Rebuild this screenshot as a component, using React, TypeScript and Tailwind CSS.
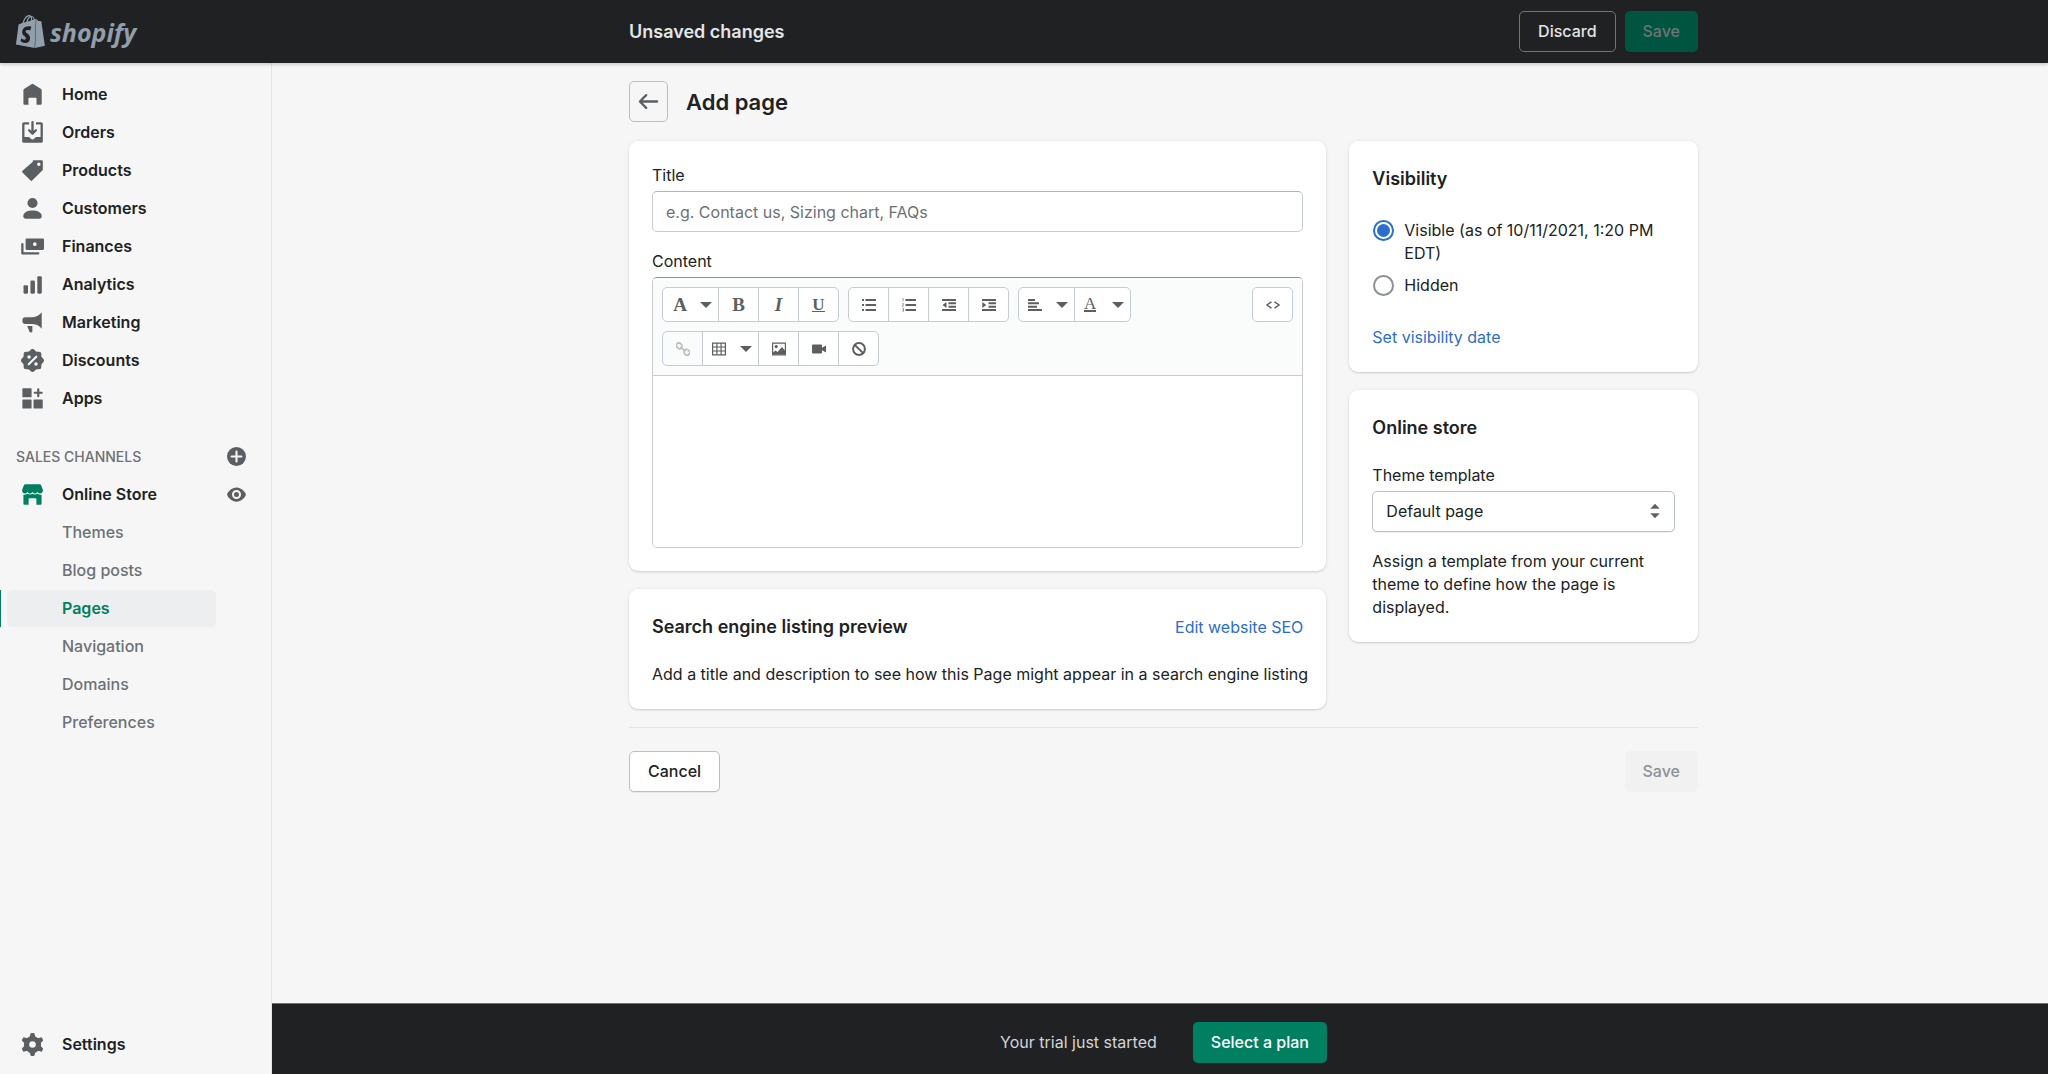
import React, { useState } from 'react'
import { SiShopify } from 'react-icons/si'

type IconProps = { children: React.ReactNode; className?: string }

function Icon({ children, className = 'size-[23px] text-[#5c5f62]' }: IconProps) {
  return (
    <svg viewBox="0 0 20 20" fill="currentColor" aria-hidden="true" className={`shrink-0 ${className}`}>
      {children}
    </svg>
  )
}

const mainLinks = [
  { label: 'Home', icon: <path d="M9.1 1a1.700 1.700 0 0 1 1.800 0l6.200 3.900c.5.3.9.900.9 1.500v11.700a.9.900 0 0 1-.9.900h-3.600v-5.300a.8.800 0 0 0-.8-.800H7.300a.8.800 0 0 0-.8.800V19H3a.9.900 0 0 1-.9-.9V6.400c0-.6.300-1.200.8-1.500z" /> },
  {
    label: 'Orders',
    icon: (
      <>
        <path d="M11 1a1 1 0 1 0-2 0v7.586L7.707 7.293a1 1 0 0 0-1.414 1.414l3 3a1 1 0 0 0 1.414 0l3-3a1 1 0 0 0-1.414-1.414L11 8.586V1z" />
        <path d="M3 14V3h4V1H2.500A1.500 1.500 0 0 0 1 2.500v15A1.500 1.500 0 0 0 2.500 19h15a1.500 1.500 0 0 0 1.500-1.500v-15A1.500 1.500 0 0 0 17.500 1H13v2h4v11h-3.500c-.775 0-1.388.662-1.926 1.244l-.110.120A1.994 1.994 0 0 1 10 16a1.994 1.994 0 0 1-1.463-.637l-.111-.120C7.888 14.664 7.275 14 6.500 14H3z" />
      </>
    ),
  },
  { label: 'Products', icon: <path fillRule="evenodd" d="M10.293 1.293A1 1 0 0 1 11 1h7a1 1 0 0 1 1 1v7a1 1 0 0 1-.293.707l-9 9a1 1 0 0 1-1.414 0l-7-7a1 1 0 0 1 0-1.414l9-8zM15.500 6a1.500 1.500 0 1 0 0-3 1.500 1.500 0 0 0 0 3z" /> },
  {
    label: 'Customers',
    icon: (
      <>
        <circle cx="10" cy="5.200" r="4.400" />
        <path d="M2.100 15.600C3 13 6.200 11.800 10 11.800s7 1.200 7.900 3.800c.500 1.700-.400 3.400-2.100 3.400H4.200c-1.700 0-2.600-1.700-2.100-3.400z" />
      </>
    ),
  },
  {
    label: 'Finances',
    icon: (
      <>
        <path fillRule="evenodd" d="M5 3h14a1 1 0 0 1 1 1v8a1 1 0 0 1-1 1H5a1 1 0 0 1-1-1V4a1 1 0 0 1 1-1zm7 6.600a1.600 1.600 0 1 0 0-3.200 1.600 1.600 0 0 0 0 3.200z" />
        <path d="M1.200 7a1 1 0 0 1 1 1v7H15a1 1 0 1 1 0 2H1.200a1 1 0 0 1-1-1V8a1 1 0 0 1 1-1z" />
      </>
    ),
  },
  {
    label: 'Analytics',
    icon: (
      <>
        <rect x="2.200" y="10.600" width="3.900" height="7.400" rx="1" />
        <rect x="8.200" y="6.500" width="3.900" height="11.500" rx="1" />
        <rect x="14.200" y="2.800" width="3.900" height="15.200" rx="1" />
      </>
    ),
  },
  { label: 'Marketing', icon: <path d="M18 1v14.500c-2.500-2.900-5-4.100-9-4.100H3.800a2.600 2.600 0 0 1-2.600-2.600v-.800a2.600 2.600 0 0 1 2.600-2.600H9C13 5.400 15.500 3.900 18 1zM5.400 13h4.500v4.600a1 1 0 0 1-1 1h-.600c-.500 0-.900-.300-1-.700z" /> },
  {
    label: 'Discounts',
    icon: (
      <>
        <path d="M11.566.66a2.189 2.189 0 0 0-3.132 0l-.962.985a2.189 2.189 0 0 1-1.592.66l-1.377-.017a2.189 2.189 0 0 0-2.215 2.215l.016 1.377a2.189 2.189 0 0 1-.66 1.592l-.984.962a2.189 2.189 0 0 0 0 3.132l.985.962c.428.418.667.994.66 1.592l-.017 1.377a2.189 2.189 0 0 0 2.215 2.215l1.377-.016a2.189 2.189 0 0 1 1.592.66l.962.984c.859.88 2.273.88 3.132 0l.962-.985a2.189 2.189 0 0 1 1.592-.66l1.377.017a2.189 2.189 0 0 0 2.215-2.215l-.016-1.377a2.189 2.189 0 0 1 .66-1.592l.984-.962c.88-.859.88-2.273 0-3.132l-.985-.962a2.189 2.189 0 0 1-.66-1.592l.017-1.377a2.189 2.189 0 0 0-2.215-2.215l-1.377.016a2.189 2.189 0 0 1-1.592-.66l-.962-.984z" />
        <path d="M6.700 13.300l6.600-6.600" stroke="#f6f6f7" strokeWidth="1.800" strokeLinecap="round" />
        <circle cx="7" cy="7" r="1.500" fill="#f6f6f7" />
        <circle cx="13" cy="13" r="1.500" fill="#f6f6f7" />
      </>
    ),
  },
  {
    label: 'Apps',
    icon: (
      <>
        <rect x="1.200" y="1" width="8" height="8" rx=".6" />
        <rect x="1.200" y="10.800" width="8" height="8" rx=".6" />
        <rect x="10.900" y="10.800" width="8" height="8" rx=".6" />
        <path d="M15 2v6M12 5h6" stroke="currentColor" strokeWidth="1.900" strokeLinecap="round" />
      </>
    ),
  },
]

const storeLinks = ['Themes', 'Blog posts', 'Pages', 'Navigation', 'Domains', 'Preferences']

function Sidebar() {
  return (
    <aside className="flex w-[272px] shrink-0 flex-col border-r border-[#e1e3e5] pt-[13px] pb-[11px]">
      <nav aria-label="Main">
        <ul className="flex flex-col gap-px">
          {mainLinks.map((link) => (
            <li key={link.label}>
              <a href="#" className="flex h-[37px] items-center gap-[18px] pl-[21px] font-semibold">
                <Icon>{link.icon}</Icon>
                {link.label}
              </a>
            </li>
          ))}
        </ul>
      </nav>

      <div className="mt-5 flex h-[39px] items-center justify-between pr-[25px] pl-4">
        <h2 className="text-[14px] font-medium text-[#6d7175]">SALES CHANNELS</h2>
        <button type="button" aria-label="Add sales channel">
          <Icon className="size-[19px] text-[#5c5f62]">
            <circle cx="10" cy="10" r="10" />
            <path d="M10 4.800v10.400M4.800 10h10.400" stroke="#f6f6f7" strokeWidth="2.200" strokeLinecap="round" />
          </Icon>
        </button>
      </div>

      <nav aria-label="Sales channels">
        <div className="flex items-center justify-between pr-[25px]">
          <a href="#" className="flex h-[37px] items-center gap-[18px] pl-[21px] font-semibold">
            <Icon className="size-[23px] text-[#008060]">
              <path d="M3.800 1h12.400c.600 0 1.100.300 1.300.900l1.500 4c.400 1.700-.700 3.200-2.400 3.200-1 0-1.800-.500-2.200-1.300-.400.800-1.200 1.300-2.200 1.300s-1.800-.500-2.200-1.300c-.400.800-1.200 1.300-2.200 1.300s-1.800-.500-2.200-1.300c-.400.800-1.200 1.300-2.200 1.300C1.700 9.100.600 7.600 1 5.900l1.500-4c.200-.600.700-.900 1.300-.9z" />
              <path d="M2.100 10.200c1.300.200 2.500-.100 3.500-.800 1.300.900 3.100.900 4.400 0 1.300.9 3.100.9 4.400 0 1 .7 2.200 1 3.500.8V18.100a.9.9 0 0 1-.9.9h-3.600v-4.900a.9.9 0 0 0-.9-.9h-5a.9.9 0 0 0-.9.9V19H3a.9.9 0 0 1-.9-.9z" />
            </Icon>
            Online Store
          </a>
          <button type="button" aria-label="View your online store">
            <Icon className="size-[19px] text-[#5c5f62]">
              <path d="M19.800 9.500C18.900 6.700 15 2.500 10 2.500S1.100 6.700.200 9.500a1.500 1.500 0 0 0 0 1c.900 2.800 4.800 7 9.800 7s8.900-4.200 9.800-7a1.500 1.500 0 0 0 0-1z" />
              <circle cx="10" cy="10" r="3.700" fill="none" stroke="#f6f6f7" strokeWidth="2.100" />
            </Icon>
          </button>
        </div>
        <ul className="mt-px flex flex-col gap-px">
          {storeLinks.map((label) => (
            <li key={label} className={`flex border-l ${label === 'Pages' ? 'border-[#008060]' : 'border-transparent'}`}>
              <a
                href="#"
                aria-current={label === 'Pages' ? 'page' : undefined}
                className={`mr-[55px] ml-[6px] flex h-[37px] flex-1 items-center rounded-[5px] pl-[55px] ${
                  label === 'Pages' ? 'bg-[#edeeef] font-semibold text-[#008060]' : 'font-medium text-[#6d7175]'
                }`}
              >
                {label}
              </a>
            </li>
          ))}
        </ul>
      </nav>

      <a href="#" className="mt-auto flex h-[37px] items-center gap-[18px] pl-[21px] font-semibold">
        <Icon>
          <circle cx="10" cy="10" r="5.200" fill="none" stroke="currentColor" strokeWidth="4.600" />
          <path d="M8.200.8c.1-.5.400-.8.900-.8h1.800c.5 0 .8.300.9.800l.8 3.200H7.400zM11.800 19.200c-.1.500-.4.800-.9.800H9.100c-.5 0-.8-.3-.9-.8L7.400 16h5.200z" />
          <path transform="rotate(60 10 10)" d="M8.200.8c.1-.5.400-.8.900-.8h1.800c.5 0 .8.300.9.800l.8 3.200H7.400zM11.800 19.200c-.1.500-.4.800-.9.800H9.100c-.5 0-.8-.3-.9-.8L7.400 16h5.200z" />
          <path transform="rotate(120 10 10)" d="M8.200.8c.1-.5.400-.8.900-.8h1.800c.5 0 .8.300.9.800l.8 3.200H7.400zM11.800 19.200c-.1.500-.4.800-.9.800H9.100c-.5 0-.8-.3-.9-.8L7.400 16h5.200z" />
        </Icon>
        Settings
      </a>
    </aside>
  )
}

function TopBar() {
  return (
    <header className="z-10 flex h-[63px] shrink-0 items-center bg-[#202123] shadow-[0_2px_3px_rgba(0,0,0,0.16)]">
      <a href="#" aria-label="shopify" className="flex w-[272px] shrink-0 items-center gap-[3px] pl-[14px] text-[#919eab]">
        <SiShopify className="size-[33px]" />
        <span className="font-['Open_Sans',sans-serif] text-[25px] leading-8 font-bold italic">shopify</span>
      </a>
      <div className="flex-1 pl-[7px]">
        <div className="mx-auto flex max-w-[1069px] items-center gap-[9px]">
          <h2 className="mr-auto text-[18px] font-semibold text-[#e3e5e7]">Unsaved changes</h2>
          <button type="button" className="h-[41px] rounded-[5px] border border-[#72767b] px-[18px] font-medium text-[#e3e5e7]">Discard</button>
          <button type="button" disabled className="h-[41px] rounded-[5px] bg-[#005540] px-[18px] font-medium text-[#6f7377]">Save</button>
        </div>
      </div>
    </header>
  )
}

function Caret() {
  return (
    <svg viewBox="0 0 12 6" className="h-[6px] w-3" fill="currentColor" aria-hidden="true">
      <path d="M0 0h12L6 6z" />
    </svg>
  )
}

type ToolProps = { label: string; children: React.ReactNode; menu?: boolean; disabled?: boolean }

function Tool({ label, children, menu, disabled }: ToolProps) {
  return (
    <button
      type="button"
      aria-label={label}
      disabled={disabled}
      className={`-ml-px flex h-[35px] items-center border border-[#c4cdd5] font-['Liberation_Serif',serif] text-[19px] leading-none text-[#5c5f62] first:ml-0 first:rounded-l-[5px] last:rounded-r-[5px] ${
        menu ? 'w-[57px] justify-between pr-[6px] pl-[9px]' : 'w-[41px] justify-center'
      } ${disabled ? 'bg-[#fafbfb] text-[#babec3]' : 'bg-white'}`}
    >
      {children}
      {menu && <Caret />}
    </button>
  )
}

function Glyph({ children }: { children: React.ReactNode }) {
  return (
    <svg viewBox="0 0 14 14" className="size-[14px]" fill="currentColor" aria-hidden="true">
      {children}
    </svg>
  )
}

function Editor() {
  return (
    <div className="overflow-hidden rounded-[5px] border border-[#c9cccf] border-t-[#8c9196]">
      <div className="flex flex-col gap-[9px] border-b border-[#c9cccf] bg-[#fafbfb] p-[9px]">
        <div className="flex gap-[9px]">
          <div className="flex">
            <Tool label="Formatting" menu><span className="w-4 text-center font-bold">A</span></Tool>
            <Tool label="Bold"><span className="font-bold">B</span></Tool>
            <Tool label="Italic"><span className="font-bold italic">I</span></Tool>
            <Tool label="Underline"><span className="border-b border-current text-[17px] leading-[13px] font-bold">U</span></Tool>
          </div>
          <div className="flex">
            <Tool label="Bulleted list">
              <Glyph>
                <path d="M0 1h2v2H0zM0 6h2v2H0zM0 11h2v2H0zM3.500 1H14v2H3.500zM3.500 6H14v2H3.500zM3.500 11H14v2H3.500z" />
              </Glyph>
            </Tool>
            <Tool label="Numbered list">
              <Glyph>
                <path d="M3.500 1H14v2H3.500zM3.500 6H14v2H3.500zM3.500 11H14v2H3.500z" />
                <path d="M.3.800 1.200.500V3.500M.2 5.700h1.500L.3 8.200h1.600M.3 10.300h1.200v3H.3M.6 11.800h.9" fill="none" stroke="currentColor" strokeWidth=".6" />
              </Glyph>
            </Tool>
            <Tool label="Outdent">
              <Glyph>
                <path d="M0 1h14v2H0zM6.500 4.300H14v2H6.500zM6.500 7.700H14v2H6.500zM0 11h14v2H0zM4.500 4v6L.5 7z" />
              </Glyph>
            </Tool>
            <Tool label="Indent">
              <Glyph>
                <path d="M0 1h14v2H0zM6.500 4.300H14v2H6.500zM6.500 7.700H14v2H6.500zM0 11h14v2H0zM.3 4v6l4-3z" />
              </Glyph>
            </Tool>
          </div>
          <div className="flex">
            <Tool label="Alignment" menu>
              <Glyph>
                <path d="M0 1h7v2H0zM0 4.300h11v2H0zM0 7.700h9v2H0zM0 11h14v2H0z" />
              </Glyph>
            </Tool>
            <Tool label="Color" menu><span className="border-b-2 border-current text-center text-[17px] leading-[13px]">A</span></Tool>
          </div>
          <div className="ml-auto flex">
            <Tool label="Show HTML">
              <Glyph>
                <path d="M5.500 3.800.8 7l4.700 3.200M8.500 3.800 13.200 7l-4.700 3.200" fill="none" stroke="currentColor" strokeWidth="1.500" />
              </Glyph>
            </Tool>
          </div>
        </div>
        <div className="flex">
          <Tool label="Insert link" disabled>
            <Glyph>
              <g fill="none" stroke="currentColor" strokeWidth="1.700">
                <rect x=".2" y="1.300" width="6" height="5" rx="2.500" transform="rotate(45 3.200 3.800)" />
                <rect x="7.800" y="7.700" width="6" height="5" rx="2.500" transform="rotate(45 10.800 10.200)" />
                <path d="M4.500 4.800l5 4.600" />
              </g>
            </Glyph>
          </Tool>
          <Tool label="Insert table" menu>
            <Glyph>
              <path d="M.6 1.100h12.800v11.800H.6zM.6 5h12.800M.6 9h12.800M4.900 1v12M9.100 1v12" fill="none" stroke="currentColor" strokeWidth="1.200" />
            </Glyph>
          </Tool>
          <Tool label="Insert image">
            <Glyph>
              <path d="M.6 1.100h12.800v11.800H.6z" fill="none" stroke="currentColor" strokeWidth="1.200" />
              <circle cx="4.200" cy="4.600" r="1.600" />
              <path d="M1 12.500v-2L3.500 8.500 5.500 10 10 5l3 3.500v4z" />
            </Glyph>
          </Tool>
          <Tool label="Insert video">
            <Glyph>
              <path d="M1 2.500h8a1 1 0 0 1 1 1v2.300L14 3.500v7L10 8.200v2.300a1 1 0 0 1-1 1H1a1 1 0 0 1-1-1v-7a1 1 0 0 1 1-1z" />
            </Glyph>
          </Tool>
          <Tool label="Clear formatting">
            <Glyph>
              <path d="M2.500 2.800l9 8.600" stroke="currentColor" strokeWidth="2" />
              <circle cx="7" cy="7" r="5.900" fill="none" stroke="currentColor" strokeWidth="2" />
            </Glyph>
          </Tool>
        </div>
      </div>
      <textarea id="content" className="block h-[171px] w-full resize-none bg-white p-3 outline-none" />
    </div>
  )
}

function Card({ children }: { children: React.ReactNode }) {
  return (
    <section className="rounded-[9px] bg-white p-[23px] shadow-[0_0_5px_rgba(23,24,24,0.05),0_1px_2px_rgba(0,0,0,0.15)]">
      {children}
    </section>
  )
}

const radioClass =
  "mt-px grid size-[21px] shrink-0 appearance-none place-content-center rounded-full border-2 border-[#8c9196] checked:border-[#2c6ecb] before:size-[13px] before:rounded-full checked:before:bg-[#2c6ecb] before:content-['']"

function App() {
  const [visible, setVisible] = useState(true)

  return (
    <div className="flex h-screen flex-col bg-[#f6f6f7] font-[Inter,sans-serif] text-[16px] leading-[23px] text-[#202223]">
      <TopBar />
      <div className="flex min-h-0 flex-1">
        <Sidebar />
        <div className="flex min-w-0 flex-1 flex-col">
          <main className="min-h-0 flex-1 pt-[18px] pl-[7px]">
            <div className="mx-auto max-w-[1069px]">
              <div className="mb-[19px] flex items-center gap-[18px]">
                <button type="button" aria-label="Back" className="flex h-[41px] w-[39px] items-center justify-center rounded-[5px] border border-[#babfc3]">
                  <Icon>
                    <path d="M17.500 10H3M8 4.500 2.500 10 8 15.500" fill="none" stroke="currentColor" strokeWidth="2" strokeLinecap="round" strokeLinejoin="round" />
                  </Icon>
                </button>
                <h1 className="text-[22px] leading-8 font-semibold">Add page</h1>
              </div>

              <div className="grid grid-cols-[minmax(0,2fr)_minmax(0,1fr)] items-start gap-[23px]">
                <div className="flex flex-col gap-[18px]">
                  <Card>
                    <label htmlFor="title" className="mb-1 block">Title</label>
                    <input
                      id="title"
                      type="text"
                      placeholder="e.g. Contact us, Sizing chart, FAQs"
                      className="mb-[18px] block h-[41px] w-full rounded-[5px] border border-[#c9cccf] border-t-[#aeb4b9] px-[13px] placeholder:text-[#6d7175]"
                    />
                    <label htmlFor="content" className="mb-1 block">Content</label>
                    <Editor />
                  </Card>
                  <Card>
                    <div className="flex items-center justify-between">
                      <h2 className="text-[18px] leading-[30px] font-semibold">Search engine listing preview</h2>
                      <a href="#" className="text-[#2c6ecb]">Edit website SEO</a>
                    </div>
                    <p className="mt-[21px] xl:whitespace-nowrap">Add a title and description to see how this Page might appear in a search engine listing</p>
                  </Card>
                </div>

                <div className="flex flex-col gap-[18px]">
                  <Card>
                    <h2 className="text-[18px] leading-[30px] font-semibold">Visibility</h2>
                    <div className="mt-[25px] flex flex-col gap-[9px]">
                      <label className="flex gap-[10px] pl-px">
                        <input type="radio" name="visibility" checked={visible} onChange={() => setVisible(true)} className={radioClass} />
                        <span>Visible (as of 10/11/2021, 1:20 PM EDT)</span>
                      </label>
                      <label className="flex gap-[10px] pl-px">
                        <input type="radio" name="visibility" checked={!visible} onChange={() => setVisible(false)} className={radioClass} />
                        <span>Hidden</span>
                      </label>
                    </div>
                    <a href="#" className="mt-[29px] block text-[#2c6ecb]">Set visibility date</a>
                  </Card>
                  <Card>
                    <h2 className="text-[18px] leading-[30px] font-semibold">Online store</h2>
                    <label htmlFor="template" className="mt-[21px] mb-1 block">Theme template</label>
                    <div className="relative">
                      <select id="template" className="h-[41px] w-full appearance-none rounded-[5px] border border-[#babfc3] bg-white px-[13px] shadow-[0_1px_0_rgba(0,0,0,0.05)]">
                        <option>Default page</option>
                      </select>
                      <svg viewBox="0 0 10 14" className="pointer-events-none absolute top-[13px] right-[15px] h-[14px] w-[10px] text-[#5c5f62]" fill="currentColor" aria-hidden="true">
                        <path d="M5 0l4.300 4.500H.7zM5 14L.7 9.500h8.600z" stroke="currentColor" strokeWidth=".4" strokeLinejoin="round" />
                      </svg>
                    </div>
                    <p className="mt-[18px]">Assign a template from your current theme to define how the page is displayed.</p>
                  </Card>
                </div>
              </div>

              <div className="mt-[18px] flex justify-between border-t border-[#e1e3e5] pt-[23px]">
                <button type="button" className="h-[41px] rounded-[5px] border border-[#babfc3] bg-white px-[18px] font-medium shadow-[0_1px_0_rgba(0,0,0,0.05)]">Cancel</button>
                <button type="button" disabled className="h-[41px] rounded-[5px] bg-[#f1f1f1] px-[18px] font-medium text-[#8c9196]">Save</button>
              </div>
            </div>
          </main>

          <footer className="flex h-[71px] shrink-0 items-center justify-center gap-9 border-t border-[#6d7175] bg-[#202123] pt-[6px] pl-[7px] text-[#d2d5d8]">
            <p>Your trial just started</p>
            <button type="button" className="h-[41px] rounded-[5px] bg-[#008060] px-[18px] font-medium text-white">Select a plan</button>
          </footer>
        </div>
      </div>
    </div>
  )
}

export default App
